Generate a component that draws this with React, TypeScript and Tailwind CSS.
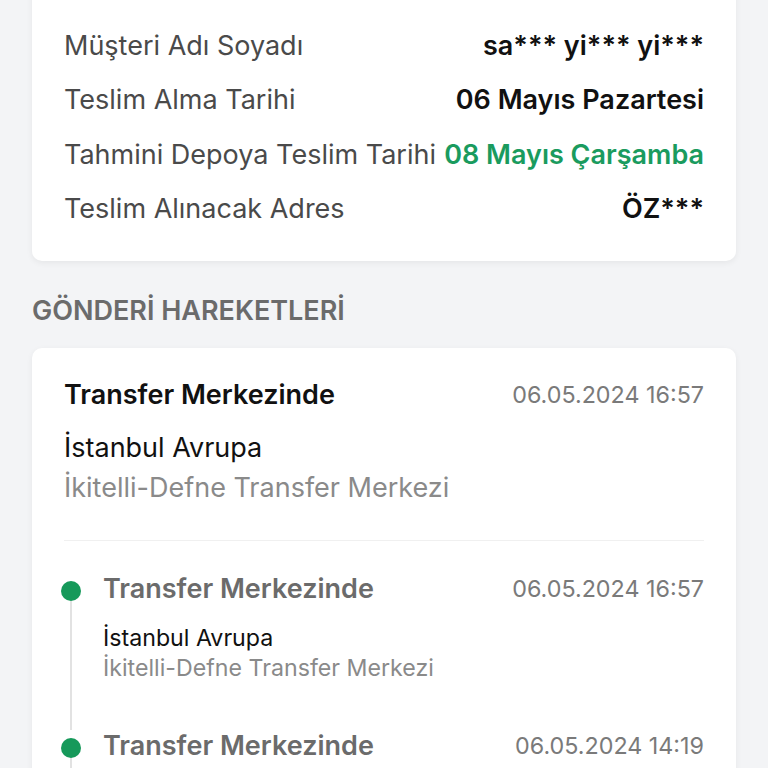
import { ReactNode } from "react";

const font = { fontFamily: "Inter, 'Noto Sans', sans-serif" };

function InfoRow({ label, children }: { label: string; children: ReactNode }) {
  return (
    <div className="flex h-[54.6px] items-center justify-between">
      <span className="text-[27px] text-[#4a4a4a]">{label}</span>
      {children}
    </div>
  );
}

function TimelineItem({ time, last }: { time: string; last?: boolean }) {
  return (
    <div className="relative flex gap-[22px] pb-[47px]">
      <div className="relative -ml-[3px] flex w-[20px] shrink-0 justify-center pt-[8px]">
        <div className="z-10 h-[20px] w-[20px] rounded-full bg-[#16995a]" />
        {!last && (
          <div className="absolute top-[18px] bottom-[-47px] left-[9px] w-[2px] bg-[#e2e2e2]" />
        )}
      </div>
      <div className="flex-1">
        <div className="flex h-[32px] items-center justify-between">
          <span className="text-[27px] font-semibold text-[#6b6b6b]">Transfer Merkezinde</span>
          <span className="text-[23.3px] text-[#7a7a7a]">{time}</span>
        </div>
        <div className="mt-[18px] text-[23.2px] leading-[30px] text-[#111]">İstanbul Avrupa</div>
        <div className="text-[23.2px] leading-[30px] text-[#8a8a8a]">İkitelli-Defne Transfer Merkezi</div>
      </div>
    </div>
  );
}

export default function App() {
  return (
    <div className="h-[768px] overflow-hidden bg-[#f3f4f6] px-[32px]" style={font}>
      <div className="-mt-[60px] rounded-[10px] bg-white px-[32px] pt-[24px] pb-[24px] shadow-[0_2px_6px_rgba(0,0,0,0.06)]">
        <InfoRow label="Teslimat No">
          <span className="text-[27px] font-semibold text-[#111]">000004120712</span>
        </InfoRow>
        <InfoRow label="Müşteri Adı Soyadı">
          <span className="text-[27px] font-semibold text-[#111]">sa*** yi*** yi***</span>
        </InfoRow>
        <InfoRow label="Teslim Alma Tarihi">
          <span className="text-[27px] font-semibold text-[#111]">06 Mayıs Pazartesi</span>
        </InfoRow>
        <InfoRow label="Tahmini Depoya Teslim Tarihi">
          <span className="text-[27px] font-semibold text-[#1a9b5e]">08 Mayıs Çarşamba</span>
        </InfoRow>
        <InfoRow label="Teslim Alınacak Adres">
          <span className="text-[27px] font-semibold text-[#111]">ÖZ***</span>
        </InfoRow>
      </div>

      <h2 className="mt-[34px] mb-[21px] text-[27px] leading-[32px] font-semibold text-[#6b6b6b]">GÖNDERİ HAREKETLERİ</h2>

      <div className="rounded-[10px] bg-white px-[32px] pt-[31px] shadow-[0_2px_6px_rgba(0,0,0,0.06)]">
        <div className="border-b border-[#f0f0f0] pb-[32px]">
          <div className="flex h-[32px] items-center justify-between">
            <span className="text-[27px] font-semibold text-[#111]">Transfer Merkezinde</span>
            <span className="text-[23.3px] text-[#7a7a7a]">06.05.2024 16:57</span>
          </div>
          <div className="mt-[17px] text-[27px] leading-[40px] text-[#111]">İstanbul Avrupa</div>
          <div className="text-[27px] leading-[40px] text-[#8a8a8a]">İkitelli-Defne Transfer Merkezi</div>
        </div>
        <div className="pt-[32px]">
          <TimelineItem time="06.05.2024 16:57" />
          <TimelineItem time="06.05.2024 14:19" />
        </div>
      </div>
    </div>
  );
}
